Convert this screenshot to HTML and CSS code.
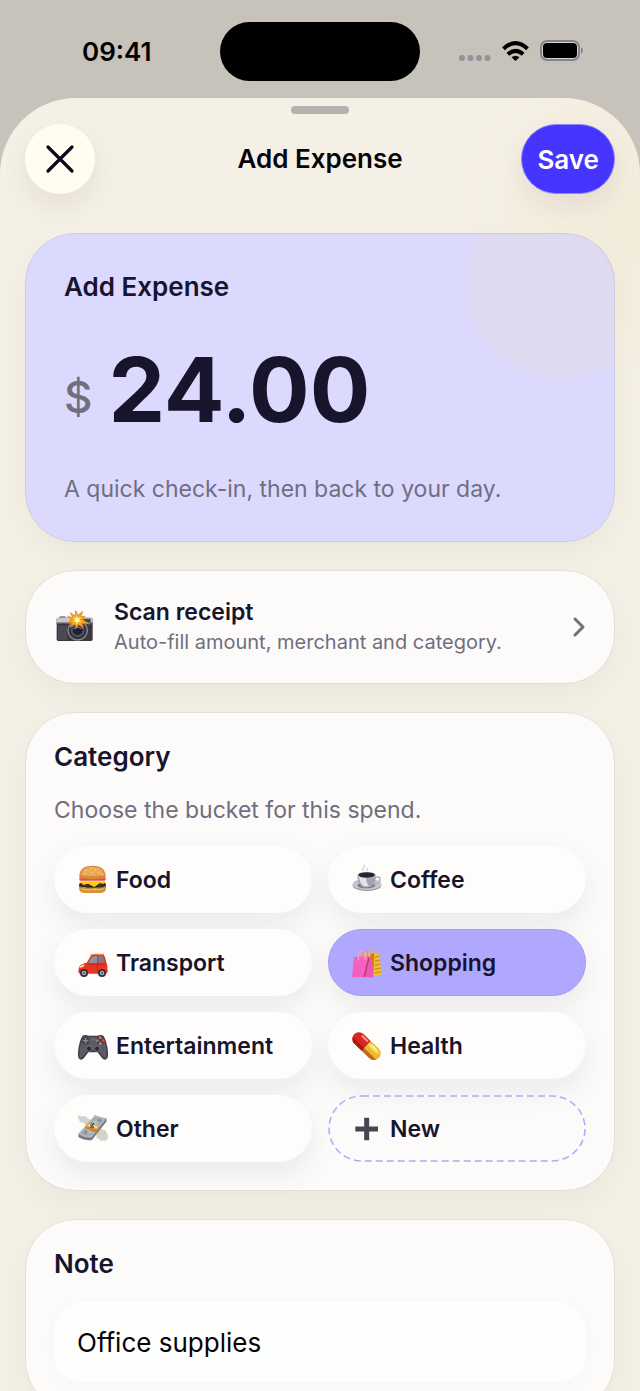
FILE: index.html
```html
<!DOCTYPE html>
<html lang="en">
<head>
    <meta charset="UTF-8">
    <meta name="viewport" content="width=device-width, initial-scale=1.0">
    <title>Add Expense</title>
    <link rel="stylesheet" href="styles.css">
</head>
<body>
    <div class="status-bar">
        <div class="status-time">09:41</div>
        <div class="island"></div>
        <div class="status-icons">
            <svg class="dots" viewBox="0 0 32 6"><g fill="#95929b"><circle cx="3" cy="3" r="3"/><circle cx="11.500" cy="3" r="3"/><circle cx="20" cy="3" r="3"/><circle cx="28.500" cy="3" r="3"/></g></svg>
            <svg class="wifi" viewBox="0 0 80 60">
                <g fill="none" stroke="#000" stroke-width="12">
                    <path d="M4 23Q40 -10 76 23"/>
                    <path d="M17 40Q40 19 63 40"/>
                </g>
                <path d="M40 60L28 49Q40 39 52 49Z"/>
            </svg>
            <svg class="battery" viewBox="0 0 44 22">
                <rect x="1" y="1" width="38" height="19" rx="6" fill="#d8d4d2" stroke="#85808f" stroke-width="2"/>
                <rect x="3" y="3" width="34" height="15" rx="4"/>
                <path d="M41 7Q45 10.500 41 14Z" fill="#85808f"/>
            </svg>
        </div>
    </div>

    <main class="sheet">
        <div class="grabber"></div>
        <header class="sheet-header">
            <button class="close-btn" type="button" aria-label="Close">
                <svg viewBox="0 0 30 30"><path d="M3 3L27 27M27 3L3 27" fill="none" stroke="#0b0916" stroke-width="3.200" stroke-linecap="round"/></svg>
            </button>
            <h1>Add Expense</h1>
            <button class="save-btn" type="button">Save</button>
        </header>

        <section class="card hero">
            <label for="amount">Add Expense</label>
            <div class="amount">
                <span class="currency">$</span>
                <input type="text" id="amount" inputmode="decimal" value="24.00">
            </div>
            <p class="hint">A quick check-in, then back to your day.</p>
        </section>

        <button class="card scan" type="button">
            <svg class="camera" viewBox="0 0 114 114">
                <path d="M8 29L13 25H27L31 29Z" fill="#77767f"/>
                <rect x="2" y="29" width="108" height="70" rx="5" fill="#393640"/>
                <path d="M2 44V34Q2 29 7 29H105Q110 29 110 34V44Z" fill="#c9c8cc"/>
                <rect x="82" y="32" width="22" height="12" rx="2" fill="#4a485b"/>
                <rect x="2" y="44" width="108" height="4" fill="#5c5964"/>
                <path d="M6 52H34V96H6Z" fill="#4c4955"/>
                <circle cx="65" cy="67" r="31" fill="#8c8b96"/>
                <circle cx="65" cy="67" r="27" fill="#34323f"/>
                <circle cx="65" cy="67" r="20" fill="#555463"/>
                <circle cx="65" cy="67" r="15" fill="#22212c"/>
                <path d="M54 63Q65 52 76 62" fill="none" stroke="#787d91" stroke-width="4"/>
                <path d="M59 8L66 22L80 10L75 26L87 25L78 34L101 48L79 46L82 60L68 50L59 62L57 49L42 58L48 45L34 45L46 36L35 25L51 29L43 14L57 24Z" fill="#f5a51f" stroke="#d97825" stroke-width="2"/>
                <path d="M62 20L66 29L76 27L71 36L78 43L67 43L61 50L58 42L49 41L56 35L50 27L60 29Z" fill="#ffe14c"/>
                <circle cx="63" cy="36" r="6" fill="#fffbd8"/>
            </svg>
            <span class="scan-text">
                <span class="scan-title">Scan receipt</span>
                <span class="scan-sub">Auto-fill amount, merchant and category.</span>
            </span>
            <svg class="chevron" viewBox="0 0 14 22"><path d="M3 3L11 11L3 19" fill="none" stroke="#706e7b" stroke-width="3" stroke-linecap="round" stroke-linejoin="round"/></svg>
        </button>

        <section class="card category">
            <h2>Category</h2>
            <p class="hint">Choose the bucket for this spend.</p>
            <div class="chips">
                <button class="chip" type="button">
                    <svg viewBox="0 0 90 90">
                        <path d="M3 65H84Q85 84 66 84H21Q2 84 3 65Z" fill="#dc9138"/>
                        <path d="M7 69H80Q76 76 66 76H21Q10 76 7 69Z" fill="#efb35c"/>
                        <rect x="3" y="53" width="81" height="15" rx="7" fill="#40291e"/>
                        <path d="M3 49H84L76 57L66 54L49 66L30 56L16 60Z" fill="#ffc824"/>
                        <path d="M3 63Q11 68 20 65Q29 72 40 68Q48 73 59 68Q70 70 84 62L81 69Q44 75 5 69Z" fill="#8a9a3b"/>
                        <rect x="4" y="38" width="79" height="9" rx="4" fill="#e65345"/>
                        <path d="M4 39Q2 2 43 2Q85 2 83 39Q43 46 4 39Z" fill="#d98934"/>
                        <path d="M8 30Q12 5 43 5Q74 5 79 30Q43 37 8 30Z" fill="#edaa5a"/>
                        <g fill="#ffe2a5"><circle cx="25" cy="16" r="2"/><circle cx="39" cy="10" r="2"/><circle cx="53" cy="14" r="2"/><circle cx="63" cy="22" r="2"/><circle cx="41" cy="22" r="2"/><circle cx="21" cy="27" r="2"/><circle cx="72" cy="29" r="2"/></g>
                    </svg>
                    Food
                </button>
                <button class="chip" type="button">
                    <svg viewBox="0 0 90 90">
                        <path d="M34 18Q29 12 35 7Q40 3 36 0M44 18Q50 12 43 8" fill="none" stroke="#bcbbc2" stroke-width="3"/>
                        <ellipse cx="45" cy="61" rx="43" ry="17" fill="#91909a"/>
                        <ellipse cx="45" cy="58" rx="43" ry="17" fill="#c6c5cb"/>
                        <ellipse cx="43" cy="61" rx="27" ry="9" fill="#7c7b86"/>
                        <path d="M69 37Q86 33 84 45Q81 58 62 57" fill="none" stroke="#b3b2bb" stroke-width="5"/>
                        <path d="M16 31Q16 56 31 65Q43 69 57 65Q72 56 72 31Z" fill="#a5a3b0"/>
                        <path d="M21 36Q22 55 36 64Q45 65 51 63Q41 51 42 36Z" fill="#e4e3e8"/>
                        <ellipse cx="44" cy="30" rx="28" ry="10" fill="#d8d7dd"/>
                        <ellipse cx="44" cy="30" rx="25" ry="8" fill="#282431"/>
                    </svg>
                    Coffee
                </button>
                <button class="chip" type="button">
                    <svg viewBox="0 0 90 90">
                        <path d="M73 24L77 16" stroke="#5a5969" stroke-width="2"/>
                        <path d="M3 59Q4 47 26 44L37 26Q41 19 54 19H70Q79 19 82 31L88 55L89 71Q88 77 81 77H7Q0 76 1 68Z" fill="#e93520"/>
                        <path d="M31 45L40 29Q43 24 51 24H57V44Z" fill="#8d91a9"/>
                        <path d="M61 24H70Q75 24 77 32L80 43L61 44Z" fill="#777c99"/>
                        <path d="M36 22Q45 16 72 20" fill="none" stroke="#f78645" stroke-width="3"/>
                        <path d="M5 54L16 49Q23 51 15 57L5 60Z" fill="#ffd68c"/>
                        <path d="M28 49H86M58 46V73M7 65H19" fill="none" stroke="#b71c16" stroke-width="2"/>
                        <circle cx="18" cy="75" r="12" fill="#302f38"/><circle cx="18" cy="75" r="7" fill="#a5a9b8"/><circle cx="18" cy="75" r="3" fill="#555461"/>
                        <circle cx="72" cy="75" r="12" fill="#302f38"/><circle cx="72" cy="75" r="7" fill="#a5a9b8"/><circle cx="72" cy="75" r="3" fill="#555461"/>
                    </svg>
                    Transport
                </button>
                <button class="chip selected" type="button" aria-pressed="true">
                    <svg viewBox="0 0 90 90">
                        <path d="M44 22Q45 4 56 3Q67 5 68 23" fill="none" stroke="#eda744" stroke-width="3"/>
                        <path d="M36 15L83 14L88 82L60 84Z" fill="#efbd31"/>
                        <path d="M66 16L64 84L56 87V18Z" fill="#c7791b"/>
                        <path d="M68 28L83 24M68 40L84 36M68 52L85 48M68 64L86 60M68 75L87 71" stroke="#bd841f" stroke-width="3"/>
                        <path d="M6 27L51 25L64 88H0Z" fill="#f55fc1"/>
                        <path d="M51 25L60 31L64 88L39 87L46 57Z" fill="#ee56b6"/>
                        <path d="M51 29L43 60L39 80L35 86" fill="none" stroke="#b93467" stroke-width="4"/>
                        <path d="M19 38Q17 11 29 8Q40 8 40 36" fill="none" stroke="#fda1bd" stroke-width="4"/>
                        <path d="M30 29Q32 10 40 9Q48 11 47 27" fill="none" stroke="#e78276" stroke-width="3"/>
                    </svg>
                    Shopping
                </button>
                <button class="chip" type="button">
                    <svg viewBox="0 0 90 90">
                        <path d="M13 15Q20 9 32 14H58Q70 9 77 15L83 28Q94 64 88 82Q81 91 72 81L59 64H31L18 81Q9 91 2 82Q-4 64 7 28Z" fill="#3e3c49"/>
                        <path d="M15 18Q20 13 30 18H60Q70 13 75 18L81 36Q89 67 84 80Q81 84 74 76L60 58H30L16 76Q9 84 6 80Q1 67 9 36Z" fill="#5c5a67"/>
                        <circle cx="23" cy="29" r="12" fill="#474551"/>
                        <path d="M23 21V37M15 29H31" stroke="#8c8b98" stroke-width="4"/>
                        <circle cx="67" cy="29" r="13" fill="#474551"/>
                        <circle cx="67" cy="20" r="4" fill="#ff6837"/><circle cx="76" cy="29" r="4" fill="#f24125"/><circle cx="67" cy="38" r="4" fill="#e28d38"/><circle cx="58" cy="29" r="4" fill="#8889a0"/>
                        <path d="M38 26H52" stroke="#6e6c7a" stroke-width="4"/>
                        <circle cx="33" cy="53" r="8" fill="#282733" stroke="#8c8a98" stroke-width="2"/>
                        <circle cx="57" cy="53" r="8" fill="#282733" stroke="#8c8a98" stroke-width="2"/>
                    </svg>
                    Entertainment
                </button>
                <button class="chip" type="button">
                    <svg viewBox="0 0 90 90">
                        <g transform="rotate(44 43 45)">
                            <path d="M43 25H12A20 20 0 0 0 12 65H43Z" fill="#d92720"/>
                            <path d="M43 25H75A20 20 0 0 1 75 65H43Z" fill="#eeb72d"/>
                            <path d="M43 54H92Q87 65 75 65H43Z" fill="#bd6a1c"/>
                            <path d="M43 54H-4Q1 65 12 65H43Z" fill="#ad1713"/>
                            <path d="M43 30H75Q83 31 86 38Q67 44 43 40Z" fill="#f8df56"/>
                            <path d="M14 32H35" stroke="#ff9b8c" stroke-width="6" stroke-linecap="round"/>
                            <path d="M53 32H72" stroke="#fff4bd" stroke-width="4" stroke-linecap="round"/>
                        </g>
                    </svg>
                    Health
                </button>
                <button class="chip" type="button">
                    <svg viewBox="0 0 90 90">
                        <path d="M27 33Q20 31 16 24Q6 28 4 16Q-2 10 2 5Q9 10 18 8Q25 5 27 13Q35 14 40 28Z" fill="#d3d4cb" stroke="#b6b7ac" stroke-width="1"/>
                        <path d="M60 47Q70 42 76 49Q85 49 85 57Q91 64 88 73Q86 82 76 78Q67 84 64 74Q56 75 56 65Z" fill="#d3d4cb" stroke="#b6b7ac" stroke-width="1"/>
                        <path d="M1 61L51 4Q63 10 85 13L86 22L42 78Q24 82 1 69Z" fill="#777b88"/>
                        <path d="M1 60L51 4Q63 10 85 13L41 70Q23 73 1 60Z" fill="#b5b8c1"/>
                        <path d="M12 59L51 13Q60 17 72 18L38 62Q25 65 12 59Z" fill="none" stroke="#858b94" stroke-width="2"/>
                        <circle cx="23" cy="54" r="6" fill="#8b919a"/><circle cx="64" cy="19" r="6" fill="#8b919a"/>
                        <path d="M23 35L32 25Q48 31 66 36L57 48Q40 44 23 35Z" fill="#eaa22c"/>
                        <path d="M28 34L35 29Q47 33 60 37L55 43Q40 40 28 34Z" fill="#dfddc9"/>
                        <path d="M49 31Q37 27 38 34Q51 36 46 42Q40 43 36 39M47 27L37 45" fill="none" stroke="#474c5c" stroke-width="3"/>
                        <path d="M23 35Q40 44 57 48V56Q38 52 23 43Z" fill="#d6821e"/>
                    </svg>
                    Other
                </button>
                <button class="chip new" type="button">
                    <svg class="dash"><rect width="100%" height="100%" rx="33" fill="none" stroke="#b0a7ff" stroke-width="1.500" stroke-dasharray="7 4"/></svg>
                    <svg viewBox="0 0 90 90"><path d="M44 11V79M10 45H78" stroke="#474551" stroke-width="15"/></svg>
                    New
                </button>
            </div>
        </section>

        <section class="card note">
            <label for="note">Note</label>
            <input type="text" id="note" value="Office supplies">
        </section>
    </main>
</body>
</html>
```
FILE: styles.css
```css
* {
    box-sizing: border-box;
}
body {
    margin: 0;
    height: 100vh;
    display: flex;
    flex-direction: column;
    background: #c7c2ba;
    color: #17142b;
    font-family: Inter, "Liberation Sans", sans-serif;
}
h1, h2, p {
    margin: 0;
}
button, input {
    font-family: inherit;
    color: inherit;
    border: none;
    padding: 0;
}
button {
    cursor: pointer;
}
svg {
    display: block;
    flex-shrink: 0;
}

/* status bar */
.status-bar {
    display: grid;
    grid-template-columns: 1fr 200px 1fr;
    align-items: center;
    height: 98px;
    padding: 4px 56px 0;
    flex-shrink: 0;
}
.status-time {
    padding-left: 26px;
    font-size: 26px;
    font-weight: 600;
    color: #000;
}
.island {
    height: 59px;
    border-radius: 30px;
    background: #000;
}
.status-icons {
    display: flex;
    justify-content: flex-end;
    align-items: center;
    gap: 11px;
}
.dots {
    width: 32px;
    height: 6px;
    margin-top: 14px;
}
.wifi {
    width: 27px;
    height: 20px;
}
.battery {
    width: 44px;
    height: 22px;
}

/* sheet */
.sheet {
    flex: 1;
    min-height: 0;
    overflow-y: auto;
    scrollbar-width: none;
    padding: 8px 25px 40px;
    border-radius: 76px 76px 0 0;
    background: radial-gradient(circle at 100% 120px, #f3ecda 0, rgba(243, 236, 218, 0) 180px), #f5f0e5;
}
.grabber {
    width: 58px;
    height: 8px;
    margin: 0 auto 10px;
    border-radius: 4px;
    background: #b5b2af;
}
.sheet-header {
    display: grid;
    grid-template-columns: 1fr auto 1fr;
    align-items: center;
    margin-bottom: 39px;
}
h1 {
    font-size: 26px;
    line-height: 32px;
    font-weight: 600;
    color: #050409;
}
.close-btn {
    display: flex;
    align-items: center;
    justify-content: center;
    width: 70px;
    height: 70px;
    border-radius: 50%;
    background: #fffcf2;
    box-shadow: 0 12px 28px rgba(23, 20, 43, 0.07);
}
.close-btn svg {
    width: 30px;
    height: 30px;
}
.save-btn {
    justify-self: end;
    height: 70px;
    padding: 0 15px;
    border: 1px solid #8f86fa;
    border-radius: 35px;
    background: #4634ff;
    color: #fff;
    font-size: 26px;
    font-weight: 600;
    box-shadow: 0 12px 28px rgba(23, 20, 43, 0.07);
}

/* cards */
.card {
    border: 1px solid #e2dfdc;
    border-radius: 50px;
    background: #fcfbf9;
    margin-bottom: 28px;
    box-shadow: 0 12px 32px rgba(23, 20, 43, 0.04);
}
.card label, h2 {
    display: block;
    font-size: 26px;
    line-height: 32px;
    font-weight: 600;
}
.hint {
    color: #706e7f;
    font-size: 23px;
    line-height: 32px;
}
.hero {
    padding: 37px 38px 36px;
    border-color: #d0cce0;
    background: radial-gradient(circle at 535px 47px, #dfdaef 0, #dfdaef 86px, rgba(223, 218, 239, 0) 106px), #dcd9ff;
}
.amount {
    display: flex;
    align-items: flex-end;
    gap: 16px;
    margin: 38px 0 36px;
}
.currency {
    font-size: 44px;
    line-height: 80px;
    font-weight: 500;
    color: #706e7f;
}
.amount input {
    flex: 1;
    min-width: 0;
    height: 96px;
    background: none;
    font-size: 90px;
    font-weight: 700;
}
.scan {
    display: flex;
    align-items: center;
    gap: 20px;
    width: 100%;
    padding: 26px 28px;
    text-align: left;
}
.camera {
    width: 38px;
    height: 38px;
    margin-left: 2px;
}
.scan-text {
    flex: 1;
}
.scan-title, .scan-sub {
    display: block;
    line-height: 30px;
}
.scan-title {
    font-size: 23px;
    font-weight: 600;
}
.scan-sub {
    font-size: 20px;
    color: #706e7f;
}
.chevron {
    width: 14px;
    height: 22px;
}
.category {
    padding: 28px;
}
.category .hint {
    margin: 21px 0 20px;
}
.chips {
    display: grid;
    grid-template-columns: 1fr 1fr;
    gap: 16px;
}
.chip {
    display: flex;
    align-items: center;
    gap: 8px;
    height: 67px;
    padding: 0 23px;
    border: 1px solid #fefdfc;
    border-radius: 34px;
    background: #fefdfc;
    font-size: 23px;
    font-weight: 600;
    box-shadow: 0 12px 28px rgba(23, 20, 43, 0.07);
}
.chip svg {
    width: 30px;
    height: 30px;
}
.chip.selected {
    background: #b0a7ff;
    border-color: #a49aef;
}
.chip.new {
    position: relative;
    background: none;
    border-color: transparent;
    box-shadow: none;
}
.chip .dash {
    position: absolute;
    inset: 0;
    width: 100%;
    height: 100%;
    overflow: visible;
}
.note {
    padding: 28px;
}
.note input {
    width: 100%;
    height: 80px;
    margin-top: 22px;
    padding: 0 23px;
    border-radius: 28px;
    background: #fefefd;
    color: #050409;
    font-size: 26px;
    box-shadow: 0 4px 16px rgba(23, 20, 43, 0.02);
}
```
